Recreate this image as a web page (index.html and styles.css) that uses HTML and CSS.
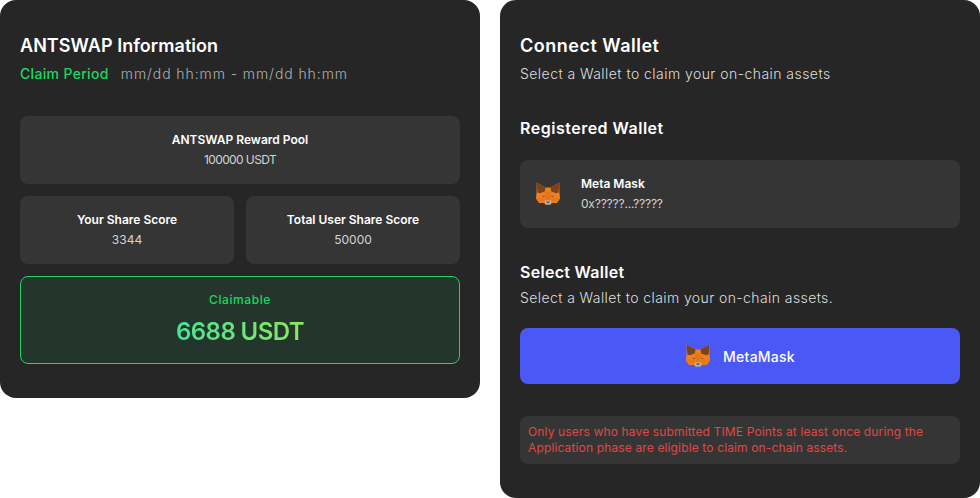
FILE: index.html
```html
<!DOCTYPE html>
<html lang="en">
<head>
    <meta charset="UTF-8">
    <meta name="viewport" content="width=device-width, initial-scale=1.0">
    <title>ANTSWAP Claim</title>
    <link rel="stylesheet" href="styles.css">
</head>
<body>
    <svg class="defs" width="0" height="0" aria-hidden="true">
        <symbol id="fox" viewBox="0 0 32 32">
            <polygon points="2,2 13,8 19,8 30,2 30,14 31,21 27,27 21,27 19,29 13,29 11,27 5,27 1,21 2,14" fill="#f0801f"/>
            <polygon points="2,2 13,8 12,13 6,15 3,14" fill="#7a4319"/>
            <polygon points="30,2 19,8 20,13 26,15 29,14" fill="#7a4319"/>
            <polygon points="12,13 20,13 19,23 13,23" fill="#e2761b"/>
            <polygon points="1,21 11,20 12,25 5,27" fill="#e97a1c"/>
            <polygon points="31,21 21,20 20,25 27,27" fill="#e97a1c"/>
            <polygon points="9,18 13,18.5 10,20" fill="#8a5426"/>
            <polygon points="23,18 19,18.5 22,20" fill="#8a5426"/>
            <polygon points="12,25 13,24 19,24 20,25 19,29 13,29" fill="#c9b7a6"/>
            <polygon points="13.5,25 18.5,25 17.5,27.5 14.5,27.5" fill="#3f74b8"/>
        </symbol>
    </svg>

    <div class="page">
        <section class="card card-info">
            <h1 class="title">ANTSWAP Information</h1>
            <p class="period"><span class="period-label">Claim Period</span><span class="period-value">mm/dd hh:mm - mm/dd hh:mm</span></p>

            <div class="stats">
                <div class="stat stat-wide">
                    <div class="stat-name">ANTSWAP Reward Pool</div>
                    <div class="stat-value stat-value-tight">100000 USDT</div>
                </div>
                <div class="stat">
                    <div class="stat-name">Your Share Score</div>
                    <div class="stat-value">3344</div>
                </div>
                <div class="stat">
                    <div class="stat-name">Total User Share Score</div>
                    <div class="stat-value">50000</div>
                </div>
                <div class="claimable stat-wide">
                    <div class="claimable-label">Claimable</div>
                    <div class="claimable-amount"><span>6688 USDT</span></div>
                </div>
            </div>
        </section>

        <section class="card card-wallet">
            <h2 class="title title-wallet">Connect Wallet</h2>
            <p class="subtitle">Select a Wallet to claim your on-chain assets</p>

            <h3 class="section-title registered-title">Registered Wallet</h3>
            <div class="wallet-row">
                <svg class="fox"><use href="#fox"/></svg>
                <div>
                    <div class="wallet-name">Meta Mask</div>
                    <div class="wallet-address">0x?????...?????</div>
                </div>
            </div>

            <h3 class="section-title select-title">Select Wallet</h3>
            <p class="select-text">Select a Wallet to claim your on-chain assets.</p>
            <button class="wallet-btn" type="button">
                <svg class="fox"><use href="#fox"/></svg>
                MetaMask
            </button>

            <p class="notice">Only users who have submitted TIME Points at least once during the Application phase are eligible to claim on-chain assets.</p>
        </section>
    </div>
</body>
</html>
```

FILE: styles.css
```css
* {
    margin: 0;
    padding: 0;
    box-sizing: border-box;
    font-family: Inter, "Noto Sans", sans-serif;
}

body {
    background: #fff;
}

.defs {
    display: block;
}

.page {
    display: flex;
    align-items: flex-start;
    gap: 20px;
    width: 980px;
}

.card {
    width: 480px;
    background: #262626;
    border-radius: 16px;
    padding: 34px 20px;
    color: #fff;
}

.title {
    font-size: 18px;
    line-height: 24px;
    font-weight: 600;
    letter-spacing: 0.05px;
}

.title-wallet {
    letter-spacing: 0.5px;
}

.period,
.subtitle {
    margin-top: 6px;
    font-size: 14px;
    line-height: 20px;
}

.period-label {
    color: #1ed760;
    font-weight: 500;
    margin-right: 12px;
    letter-spacing: 0.33px;
}

.period-value {
    color: #b0b0b0;
    font-weight: 300;
    letter-spacing: 0.92px;
}

.stats {
    display: grid;
    grid-template-columns: 1fr 1fr;
    gap: 12px;
    margin-top: 32px;
}

.stat {
    height: 68px;
    background: #353535;
    border-radius: 8px;
    display: flex;
    flex-direction: column;
    justify-content: center;
    align-items: center;
    gap: 2px;
}

.stat-wide {
    grid-column: 1 / 3;
}

.stat-name {
    font-size: 12px;
    line-height: 18px;
    font-weight: 600;
}

.stat-value {
    font-size: 12px;
    line-height: 18px;
    color: #d4d4d4;
}

.stat-value-tight {
    letter-spacing: -0.6px;
}

.claimable {
    height: 88px;
    background: #24362b;
    border: 1px solid #1ed760;
    border-radius: 8px;
    text-align: center;
    padding-top: 14px;
}

.claimable-label {
    font-size: 12px;
    line-height: 18px;
    font-weight: 500;
    color: #1ed760;
    letter-spacing: 0.6px;
}

.claimable-amount {
    margin-top: 7px;
    font-size: 24px;
    line-height: 32px;
    font-weight: 600;
    letter-spacing: -0.6px;
}

.claimable-amount span {
    background: linear-gradient(90deg, #46e596, #8ee75c);
    -webkit-background-clip: text;
    background-clip: text;
    color: transparent;
}

.subtitle {
    color: #dedede;
    font-weight: 300;
    letter-spacing: 0.45px;
}

.section-title {
    font-size: 16px;
    line-height: 24px;
    font-weight: 600;
}

.registered-title {
    margin-top: 32px;
    letter-spacing: 0.5px;
}

.wallet-row {
    margin-top: 20px;
    height: 68px;
    background: #353535;
    border-radius: 8px;
    padding-left: 15px;
    display: flex;
    align-items: center;
    gap: 20px;
}

.fox {
    width: 26px;
    height: 26px;
    flex: none;
}

.wallet-name {
    font-size: 12px;
    line-height: 18px;
    font-weight: 600;
}

.wallet-address {
    margin-top: 2px;
    font-size: 12px;
    line-height: 18px;
    color: #d4d4d4;
    letter-spacing: -0.2px;
}

.select-title {
    margin-top: 32px;
    letter-spacing: 0.3px;
}

.select-text {
    margin-top: 4px;
    font-size: 14px;
    line-height: 20px;
    font-weight: 300;
    color: #dedede;
    letter-spacing: 0.41px;
}

.wallet-btn {
    margin-top: 20px;
    width: 100%;
    height: 56px;
    background: #4a58f6;
    border: none;
    border-radius: 8px;
    color: #fff;
    font-size: 14px;
    font-weight: 500;
    letter-spacing: 0.25px;
    display: flex;
    justify-content: center;
    align-items: center;
    gap: 12px;
}

.notice {
    margin-top: 32px;
    background: #353535;
    border-radius: 8px;
    padding: 8px;
    font-size: 12px;
    line-height: 16px;
    color: #e04747;
    letter-spacing: 0.14px;
}
```
